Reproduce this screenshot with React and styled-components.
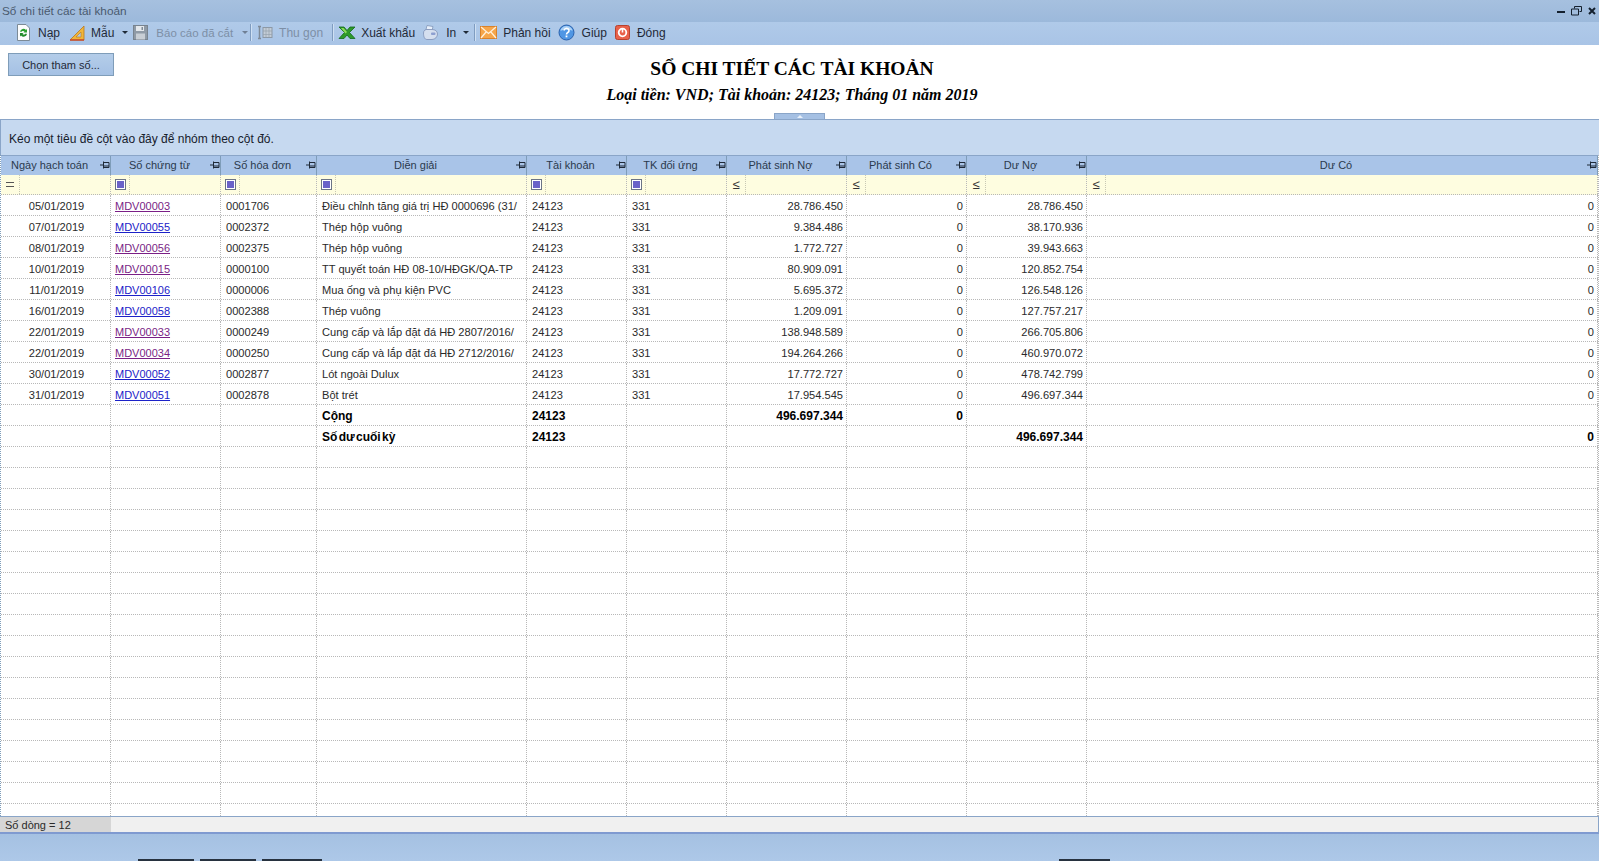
import React from 'react'
import styled, { createGlobalStyle } from 'styled-components'

const GlobalStyle = createGlobalStyle`
  html, body { margin: 0; padding: 0; height: 100%; overflow: hidden; background: #fff; }
  body { font-family: "Liberation Sans", Arial, sans-serif; font-size: 12px; color: #222; }
  #root { height: 100%; }
`

const COLS = '110px 110px 96px 210px 100px 100px 120px 120px 120px 1fr'

const Page = styled.div`
  height: 861px;
  display: flex;
  flex-direction: column;
  overflow: hidden;
`
const TitleBar = styled.div`
  height: 22px;
  flex-shrink: 0;
  display: flex;
  align-items: center;
  justify-content: space-between;
  padding: 0 3px 0 2px;
  background: linear-gradient(#a6c0df, #9cb9db);
  color: #4a5a6e;
  font-size: 11.8px;
`
const WinButtons = styled.div`
  display: flex;
  align-items: center;
  gap: 6px;
  svg { display: block; }
`
const Toolbar = styled.div`
  height: 23px;
  flex-shrink: 0;
  box-sizing: border-box;
  display: flex;
  align-items: center;
  padding: 0 0 2px 6px;
  background: linear-gradient(#b0cae9, #a9c4e6);
  color: #1f2a38;
`
const Grip = styled.span`
  width: 3px;
  height: 17px;
  margin-right: 7px;
  background-image: radial-gradient(#8aa2bf 40%, transparent 45%);
  background-size: 2px 2px;
`
const ToolItem = styled.span`
  display: flex;
  align-items: center;
  gap: ${p => p.$gap ?? 7}px;
  margin-right: ${p => p.$after ?? 8}px;
  font-size: ${p => p.$size ?? 12}px;
  color: ${p => (p.$off ? '#7d8fa6' : '#1f2a38')};
  white-space: nowrap;
  svg { display: block; flex-shrink: 0; }
`
const Caret = styled.span`
  width: 0;
  height: 0;
  margin: 0 ${p => p.$after ?? 3}px 0 ${p => p.$before ?? 8}px;
  border-left: 3px solid transparent;
  border-right: 3px solid transparent;
  border-top: 3px solid ${p => (p.$off ? '#6f7f94' : '#1f2a38')};
`
const ToolSep = styled.span`
  width: 1px;
  height: 17px;
  margin-right: ${p => p.$after ?? 6}px;
  background: #7f9cc0;
  box-shadow: 1px 0 0 #cfe0f3;
`
const ReportHead = styled.div`
  height: 68px;
  flex-shrink: 0;
  display: grid;
  grid-template-columns: 1fr auto 1fr;
  padding: 8px 0 0 8px;
  box-sizing: border-box;
`
const ParamButton = styled.button`
  width: 106px;
  height: 23px;
  padding: 0;
  border: 1px solid #7f9db9;
  background: linear-gradient(#b4cde9, #a5c1e4);
  color: #1f2a38;
  font: 11px "Liberation Sans", Arial, sans-serif;
`
const Heading = styled.div`
  margin-right: 23px;
  text-align: center;
  font-family: "Liberation Serif", "Times New Roman", serif;
  color: #000;
`
const ReportTitle = styled.div`
  font-size: 19.5px;
  font-weight: bold;
  line-height: 24px;
  margin-top: 4px;
`
const ReportSub = styled.div`
  font-size: 16px;
  font-weight: bold;
  font-style: italic;
  line-height: 20px;
  margin-top: 4px;
`
const Splitter = styled.div`
  height: 6px;
  flex-shrink: 0;
  display: flex;
  justify-content: center;
`
const SplitHandle = styled.div`
  width: 49px;
  height: 5px;
  border: 1px solid #8aa5c8;
  border-bottom: 0;
  background: #a5c0e3;
  display: flex;
  justify-content: center;
  &::after {
    content: "";
    margin-top: 1px;
    width: 0;
    height: 0;
    border-left: 3px solid transparent;
    border-right: 3px solid transparent;
    border-bottom: 3px solid #e8f0fa;
  }
`
const GroupPanel = styled.div`
  height: 36px;
  flex-shrink: 0;
  display: flex;
  align-items: center;
  padding: 2px 0 0 8px;
  box-sizing: border-box;
  background: #c6d9f0;
  border-top: 1px solid #8aa5c8;
  border-left: 1px solid #8aa5c8;
  color: #16202c;
`
const GridBox = styled.div`
  flex: 1;
  min-height: 0;
  display: flex;
  flex-direction: column;
  overflow: hidden;
  border-left: 1px dotted #7f9db9;
  border-right: 1px dotted #b8b8b8;
`
const HeaderRow = styled.div`
  height: 20px;
  flex-shrink: 0;
  box-sizing: border-box;
  display: grid;
  grid-template-columns: ${COLS};
  background: #a9c4e8;
  border-top: 1px solid #8aa5c8;
  font-size: 11px;
`
const HeaderCell = styled.div`
  position: relative;
  display: flex;
  align-items: center;
  justify-content: center;
  padding: 0 12px 2px 0;
  box-sizing: border-box;
  border-right: 1px solid #7f9db9;
  color: #2b3a4d;
  svg { position: absolute; right: 0; top: 5px; }
`
const FilterRow = styled.div`
  height: 20px;
  flex-shrink: 0;
  box-sizing: border-box;
  display: grid;
  grid-template-columns: ${COLS};
  background: #fefde0;
  border-bottom: 1px dotted #b8b8b8;
`
const FilterCell = styled.div`
  display: flex;
  border-right: 1px dotted #b8b8b8;
`
const FilterIcon = styled.div`
  width: 18px;
  flex-shrink: 0;
  display: flex;
  align-items: center;
  justify-content: center;
  border-right: 1px dotted #c8c8b4;
  color: #333;
`
const OpBox = styled.span`
  width: 11px;
  height: 11px;
  border: 1px solid #6b7486;
  background: #fff;
  padding: 1px;
  box-sizing: border-box;
  &::after {
    content: "";
    display: block;
    width: 7px;
    height: 7px;
    background: #6a62c8;
  }
`
const OpEq = styled.span`
  width: 8px;
  height: 3px;
  border-top: 1px solid #555;
  border-bottom: 1px solid #555;
`
const OpLe = styled.span`
  font-size: 13px;
  line-height: 13px;
`
const Rows = styled.div`
  flex: 1;
  min-height: 0;
  overflow: hidden;
`
const Row = styled.div`
  height: 21px;
  box-sizing: border-box;
  display: grid;
  grid-template-columns: ${COLS};
  border-bottom: 1px dotted #b8b8b8;
`
const Cell = styled.div`
  display: flex;
  align-items: center;
  justify-content: ${p => (p.$align === 'right' ? 'flex-end' : p.$align === 'center' ? 'center' : 'flex-start')};
  padding: 2px 3px 0 5px;
  box-sizing: border-box;
  min-width: 0;
  overflow: hidden;
  white-space: nowrap;
  border-right: 1px dotted #b8b8b8;
  font-size: ${p => (p.$bold ? 12 : 11.1)}px;
  font-weight: ${p => (p.$bold ? 'bold' : 'normal')};
  word-spacing: ${p => (p.$bold ? -2 : 0)}px;
  color: ${p => (p.$bold ? '#000' : '#2a2a2a')};
`
const DocLink = styled.a`
  margin-left: -1px;
  font-size: 11px;
  color: ${p => (p.$visited ? '#7a1f86' : '#1c22c8')};
  text-decoration: underline;
`
const StatusBar = styled.div`
  height: 18px;
  flex-shrink: 0;
  box-sizing: border-box;
  display: flex;
  background: #f0f0f0;
  border-top: 1px solid #8aa5c8;
  border-bottom: 2px solid #7f9ad0;
  border-right: 1px solid #8aa5c8;
  font-size: 11px;
`
const StatusCount = styled.div`
  width: 111px;
  display: flex;
  align-items: center;
  padding: 1px 0 0 5px;
  box-sizing: border-box;
  background: #d6d6d6;
  color: #2a2a2a;
`
const Footer = styled.div`
  height: 27px;
  flex-shrink: 0;
  display: flex;
  align-items: flex-end;
  background: linear-gradient(#a5c1e2, #adc8e8);
`
const TabEdge = styled.span`
  height: 2px;
  width: ${p => p.$w}px;
  margin-left: ${p => p.$left}px;
  background: #27323f;
`

const Pin = () => (
  <svg width="10" height="8" viewBox="0 0 10 8">
    <path d="M0 4h3M3.500 .5v7M3.500 1.500h5.500v5h-5.500M3.500 5h5.500" fill="none" stroke="#1f2a38" strokeWidth="1" />
  </svg>
)

const IconRefresh = () => (
  <svg width="15" height="17" viewBox="0 0 15 17">
    <path d="M1.500 .5h8.500l3.500 3.500v12.500h-12z" fill="#fbfcfd" stroke="#7c8a96" />
    <path d="M4 7.500a3.500 3.500 0 0 1 6-1.500l1-1v3.500h-3.500l1-1a2 2 0 0 0-3.200 .500z" fill="#2aa02f" />
    <path d="M11 10a3.500 3.500 0 0 1-6 1.500l-1 1v-3.500h3.500l-1 1a2 2 0 0 0 3.200-.500z" fill="#1f8a2a" />
  </svg>
)
const IconRuler = () => (
  <svg width="16" height="16" viewBox="0 0 16 16">
    <path d="M15 1v14H1z" fill="#f0b53a" stroke="#b7791f" strokeWidth=".8" />
    <path d="M12 7v5H7z" fill="#b4cae6" stroke="#b7791f" strokeWidth=".6" />
    <path d="M1 15h14" stroke="#c9472b" strokeWidth="1.400" />
  </svg>
)
const IconSave = () => (
  <svg width="15" height="15" viewBox="0 0 15 15">
    <rect x=".5" y=".5" width="14" height="14" fill="#8f9aa6" stroke="#78838f" />
    <rect x="3" y="1" width="8" height="5" fill="#e4e8ec" />
    <rect x="3" y="8.500" width="9" height="6" fill="#c8ced5" />
    <rect x="8.500" y="2" width="1.500" height="3" fill="#7f8a96" />
  </svg>
)
const IconCollapse = () => (
  <svg width="16" height="15" viewBox="0 0 16 15">
    <path d="M1 1.500h3M2.500 1.500v12M1 13.500h3" stroke="#7f8a96" strokeWidth="1.500" fill="none" />
    <rect x="6" y="2.500" width="9" height="10" fill="#c3ccd6" stroke="#8c98a5" />
    <path d="M6 6h9M6 9.500h9M9 2.500v10M12 2.500v10" stroke="#96a2ae" strokeWidth=".7" />
  </svg>
)
const IconExcel = () => (
  <svg width="18" height="15" viewBox="0 0 18 15">
    <path d="M1 2h5l3 3.500 3-3.500h5l-5.500 5.500 5.500 6h-5l-3-3.500-3 3.500H1l5.500-6z" fill="#2f9a2a" stroke="#116b1b" strokeWidth=".8" />
    <path d="M3 3h2.500l3.500 4-1.500 1.500z" fill="#8fdc5c" />
  </svg>
)
const IconPrint = () => (
  <svg width="17" height="17" viewBox="0 0 17 17">
    <path d="M5 1.500l6 1-1 4-6-1z" fill="#e8f0fb" stroke="#8095b8" strokeWidth=".8" />
    <path d="M1.500 9c0-2.500 2-4 4.500-3.500h4c3 0 5.500 1.500 5.500 4.500 0 3-2.500 5.500-5.500 5.500H5c-2.500 0-3.500-3-3.500-6.500z" fill="#d5dfef" stroke="#7d8fb5" strokeWidth=".8" />
    <rect x="9" y="8.500" width="4.500" height="2.500" rx="1" fill="#8d9fd0" />
  </svg>
)
const IconMail = () => (
  <svg width="17" height="13" viewBox="0 0 17 13">
    <rect x=".5" y=".5" width="16" height="12" fill="#f6a64b" stroke="#d9822b" />
    <path d="M1 1l7.500 6.500L16 1M1 12l5.500-6.500M16 12l-5.500-6.500" fill="none" stroke="#fff1dc" strokeWidth="1.200" />
  </svg>
)
const IconHelp = () => (
  <svg width="17" height="17" viewBox="0 0 17 17">
    <circle cx="8.500" cy="8.500" r="7.500" fill="#4f96e4" stroke="#2a62ae" />
    <path d="M2.500 7a6 5 0 0 1 12 0c-3-2-8-2-12 0z" fill="#a9d0f6" />
    <path d="M6.200 6.500a2.400 2.200 0 1 1 3.600 2c-1 .600-1.300 1-1.300 2" fill="none" stroke="#fff" strokeWidth="1.600" />
    <rect x="7.600" y="11.500" width="1.800" height="1.800" fill="#fff" />
  </svg>
)
const IconClose = () => (
  <svg width="15" height="15" viewBox="0 0 15 15">
    <rect x=".5" y=".5" width="14" height="14" rx="2" fill="#e8614a" stroke="#b6412e" />
    <circle cx="7.500" cy="7.500" r="3.800" fill="none" stroke="#fff" strokeWidth="1.800" />
    <path d="M7.500 3v4.500" stroke="#fff" strokeWidth="1.600" />
  </svg>
)

const columns = ['Ngày hạch toán', 'Số chứng từ', 'Số hóa đơn', 'Diễn giải', 'Tài khoản', 'TK đối ứng', 'Phát sinh Nợ', 'Phát sinh Có', 'Dư Nợ', 'Dư Có']
const filters = ['eq', 'box', 'box', 'box', 'box', 'box', 'le', 'le', 'le', 'le']

const data = [
  ['05/01/2019', 'MDV00003', true, '0001706', 'Điều chỉnh tăng giá trị HĐ 0000696 (31/', '28.786.450', '28.786.450'],
  ['07/01/2019', 'MDV00055', false, '0002372', 'Thép hộp vuông', '9.384.486', '38.170.936'],
  ['08/01/2019', 'MDV00056', true, '0002375', 'Thép hộp vuông', '1.772.727', '39.943.663'],
  ['10/01/2019', 'MDV00015', true, '0000100', 'TT quyết toán HĐ 08-10/HĐGK/QA-TP', '80.909.091', '120.852.754'],
  ['11/01/2019', 'MDV00106', false, '0000006', 'Mua ống và phụ kiện PVC', '5.695.372', '126.548.126'],
  ['16/01/2019', 'MDV00058', false, '0002388', 'Thép vuông', '1.209.091', '127.757.217'],
  ['22/01/2019', 'MDV00033', true, '0000249', 'Cung cấp và lắp đặt đá HĐ 2807/2016/', '138.948.589', '266.705.806'],
  ['22/01/2019', 'MDV00034', true, '0000250', 'Cung cấp và lắp đặt đá HĐ 2712/2016/', '194.264.266', '460.970.072'],
  ['30/01/2019', 'MDV00052', false, '0002877', 'Lót ngoài Dulux', '17.772.727', '478.742.799'],
  ['31/01/2019', 'MDV00051', false, '0002878', 'Bột trét', '17.954.545', '496.697.344'],
]

const emptyRows = Array.from({ length: 18 }, (_, i) => i)

const TotalRow = ({ label, debit, credit, balance, balanceCredit }) => (
  <Row>
    <Cell />
    <Cell />
    <Cell />
    <Cell $bold>{label}</Cell>
    <Cell $bold>24123</Cell>
    <Cell />
    <Cell $bold $align="right">{debit}</Cell>
    <Cell $bold $align="right">{credit}</Cell>
    <Cell $bold $align="right">{balance}</Cell>
    <Cell $bold $align="right">{balanceCredit}</Cell>
  </Row>
)

const App = () => (
  <Page>
    <GlobalStyle />
    <TitleBar>
      <span>Sổ chi tiết các tài khoản</span>
      <WinButtons>
        <svg width="8" height="8" viewBox="0 0 8 8"><path d="M0 5h8" stroke="#14202e" strokeWidth="2" /></svg>
        <svg width="11" height="10" viewBox="0 0 11 10"><path d="M3.500 2.500v-2h7v5h-2M.5 3h7v6h-7z" fill="none" stroke="#14202e" /></svg>
        <svg width="8" height="8" viewBox="0 0 8 8"><path d="M1 1l6 6M7 1l-6 6" stroke="#14202e" strokeWidth="2" /></svg>
      </WinButtons>
    </TitleBar>
    <Toolbar>
      <Grip />
      <ToolItem $after={9}><IconRefresh />Nạp</ToolItem>
      <ToolItem $after={0} $gap={6}><IconRuler />Mẫu</ToolItem>
      <Caret $after={5} />
      <ToolItem $off $after={0} $gap={8} $size={11.5}><IconSave />Báo cáo đã cắt</ToolItem>
      <Caret $off $before={9} $after={2} />
      <ToolSep />
      <ToolItem $off $after={9} $gap={6}><IconCollapse />Thu gọn</ToolItem>
      <ToolSep $after={5} />
      <ToolItem $after={7} $gap={5}><IconExcel />Xuất khẩu</ToolItem>
      <ToolItem $after={0} $gap={7}><IconPrint />In</ToolItem>
      <Caret $before={7} $after={5} />
      <ToolSep $after={5} />
      <ToolItem $gap={6} $after={7}><IconMail />Phản hồi</ToolItem>
      <ToolItem $after={8}><IconHelp />Giúp</ToolItem>
      <ToolItem><IconClose />Đóng</ToolItem>
    </Toolbar>
    <ReportHead>
      <div><ParamButton>Chọn tham số...</ParamButton></div>
      <Heading>
        <ReportTitle>SỔ CHI TIẾT CÁC TÀI KHOẢN</ReportTitle>
        <ReportSub>Loại tiền: VND; Tài khoản: 24123; Tháng 01 năm 2019</ReportSub>
      </Heading>
      <div />
    </ReportHead>
    <Splitter><SplitHandle /></Splitter>
    <GroupPanel>Kéo một tiêu đề cột vào đây để nhóm theo cột đó.</GroupPanel>
    <GridBox>
      <HeaderRow>
        {columns.map(c => <HeaderCell key={c}>{c}<Pin /></HeaderCell>)}
      </HeaderRow>
      <FilterRow>
        {filters.map((f, i) => (
          <FilterCell key={i}>
            <FilterIcon>
              {f === 'eq' && <OpEq />}
              {f === 'box' && <OpBox />}
              {f === 'le' && <OpLe>≤</OpLe>}
            </FilterIcon>
          </FilterCell>
        ))}
      </FilterRow>
      <Rows>
        {data.map(d => (
          <Row key={d[1]}>
            <Cell $align="center">{d[0]}</Cell>
            <Cell><DocLink href="#" $visited={d[2]}>{d[1]}</DocLink></Cell>
            <Cell>{d[3]}</Cell>
            <Cell>{d[4]}</Cell>
            <Cell>24123</Cell>
            <Cell>331</Cell>
            <Cell $align="right">{d[5]}</Cell>
            <Cell $align="right">0</Cell>
            <Cell $align="right">{d[6]}</Cell>
            <Cell $align="right">0</Cell>
          </Row>
        ))}
        <TotalRow label="Cộng" debit="496.697.344" credit="0" />
        <TotalRow label="Số dư cuối kỳ" balance="496.697.344" balanceCredit="0" />
        {emptyRows.map(i => (
          <Row key={i}>
            {columns.map(c => <Cell key={c} />)}
          </Row>
        ))}
      </Rows>
    </GridBox>
    <StatusBar><StatusCount>Số dòng = 12</StatusCount></StatusBar>
    <Footer>
      <TabEdge $left={138} $w={56} />
      <TabEdge $left={6} $w={56} />
      <TabEdge $left={6} $w={60} />
      <TabEdge $left={737} $w={51} />
    </Footer>
  </Page>
)

export default App
